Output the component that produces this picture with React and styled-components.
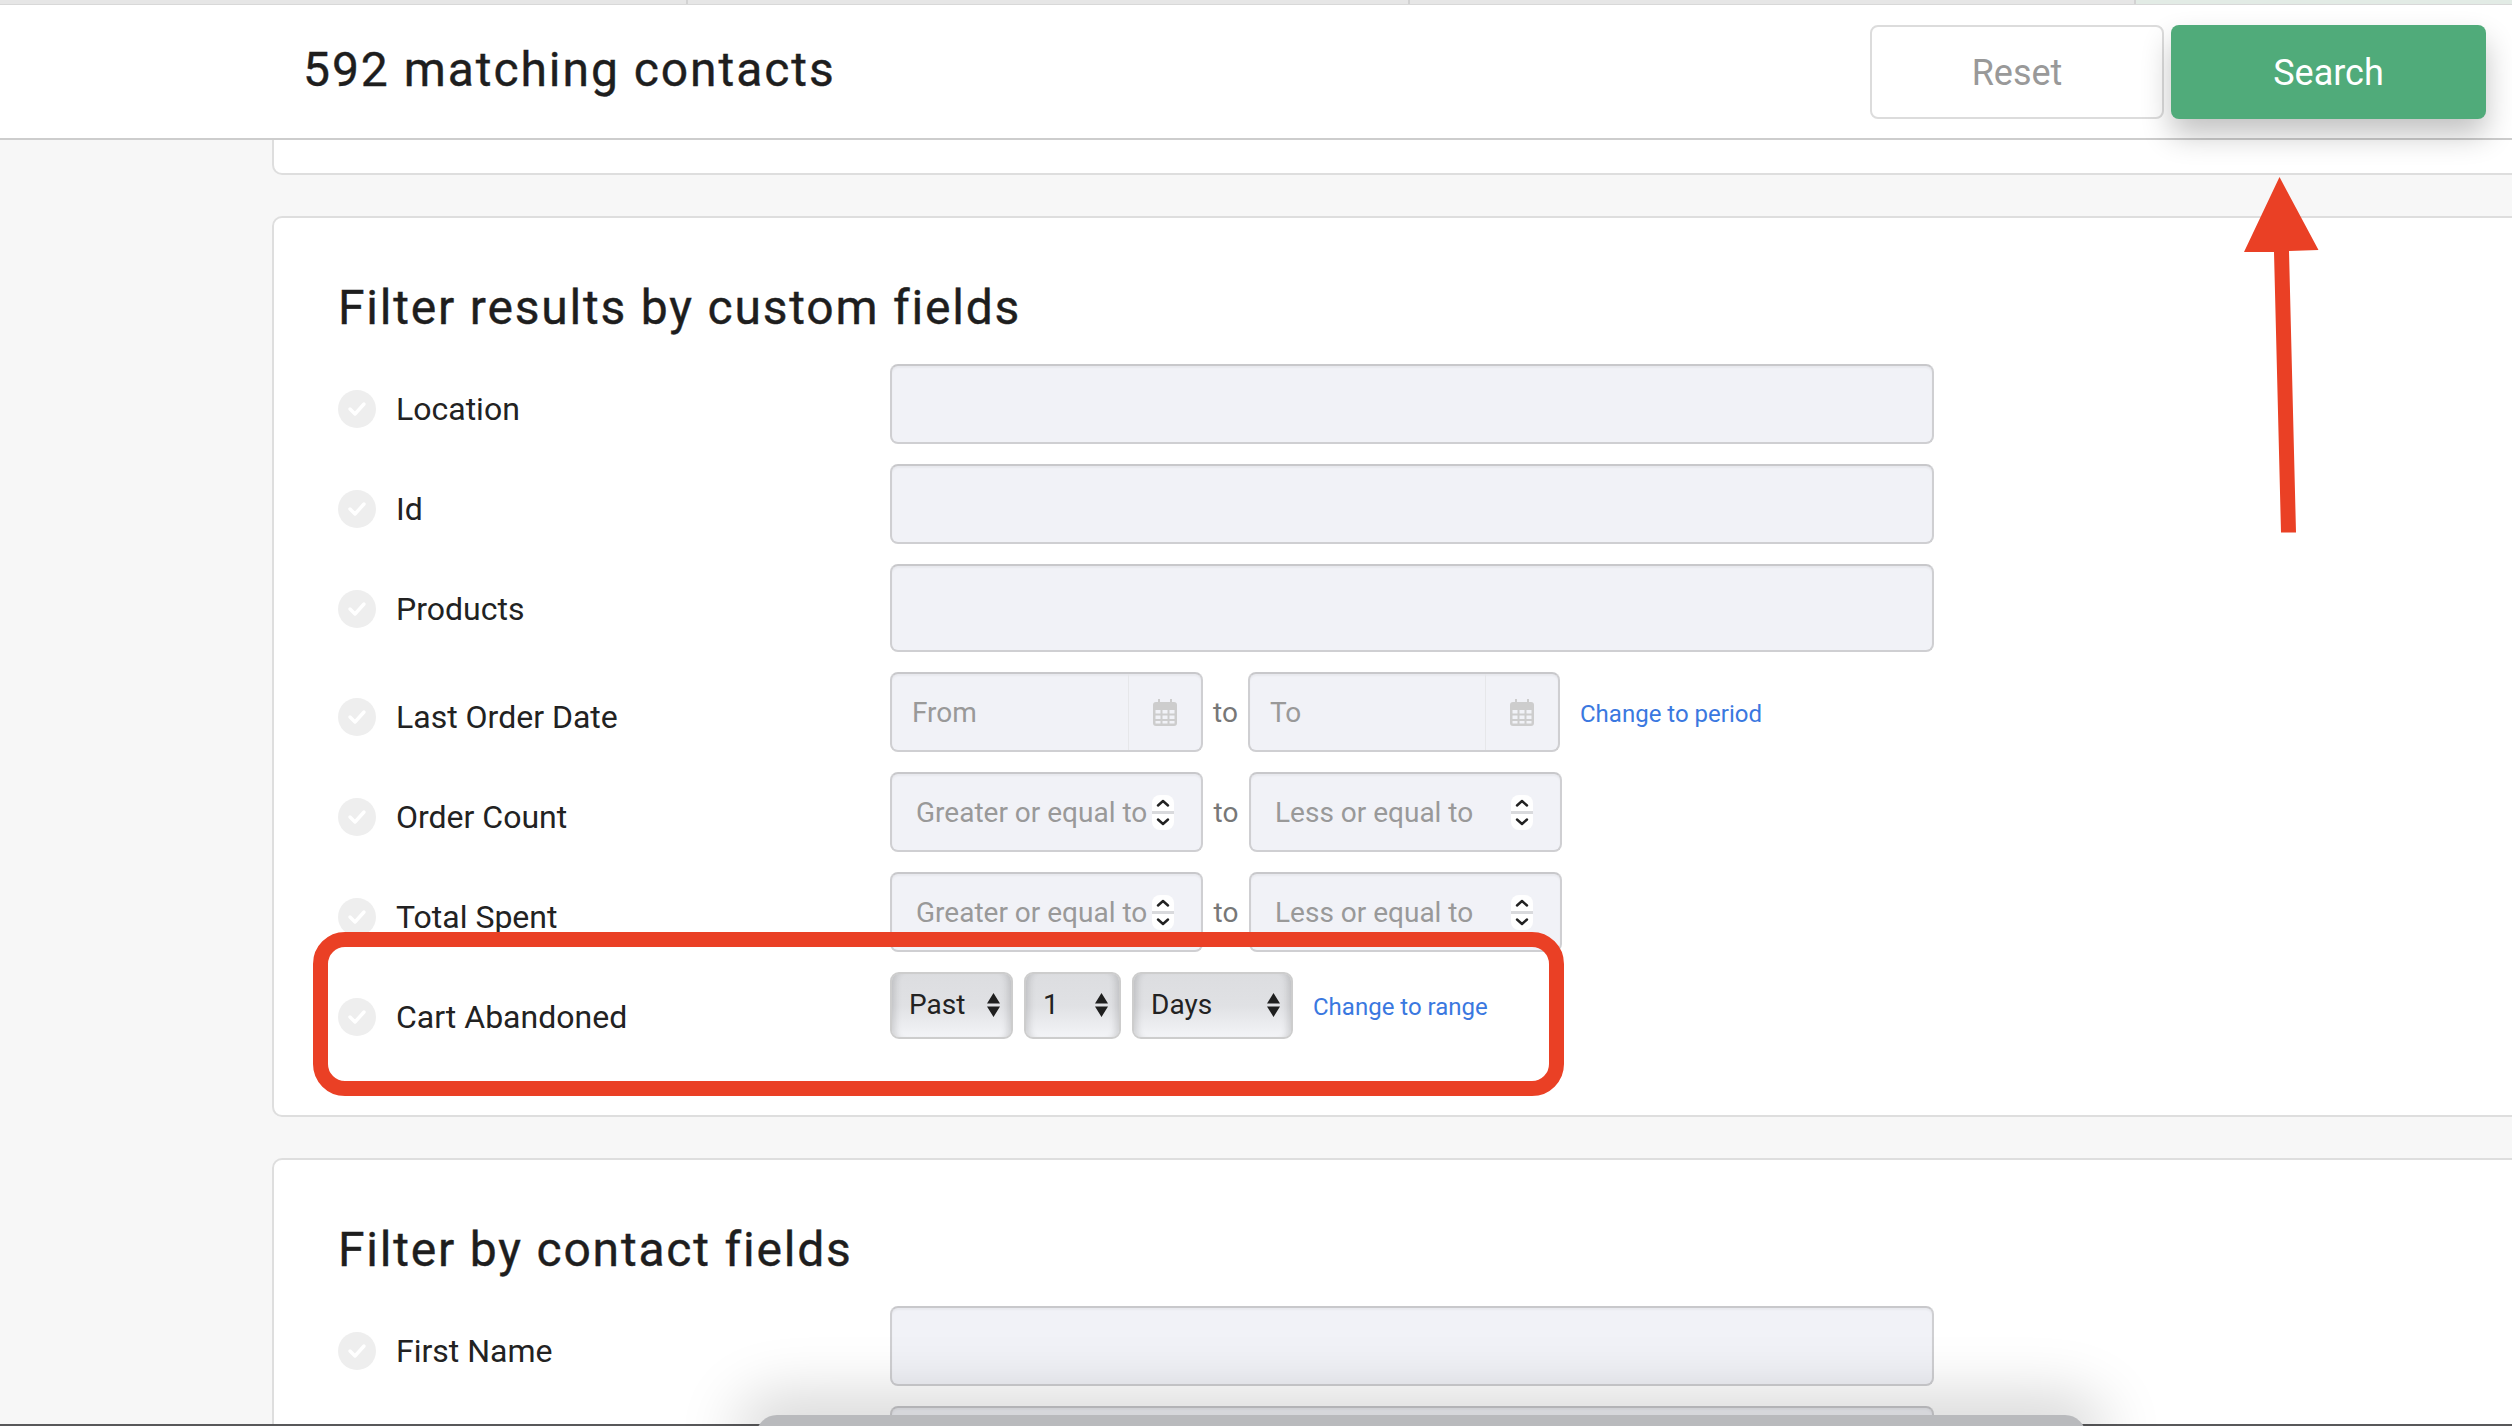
import React from 'react';
import styled, { createGlobalStyle } from 'styled-components';

const GlobalStyle = createGlobalStyle`
  html, body {
    margin: 0;
    padding: 0;
    background: #f7f7f7;
    font-family: Roboto, "Liberation Sans", sans-serif;
  }
  * { box-sizing: border-box; }
`;

const Page = styled.div`
  position: relative;
  height: 100vh;
  overflow: hidden;
  background: #f7f7f7;
`;

const TabStrip = styled.div`
  display: grid;
  grid-template-columns: 688px 722px 726px 1fr;
  height: 4px;
  background: #e6e6e6;
`;

const TabEdge = styled.span`
  border-right: 2px solid #d2d2d2;
  &:last-child { border-right: 0; background: #e2ebe5; }
`;

const Header = styled.header`
  position: relative;
  z-index: 2;
  display: flex;
  align-items: center;
  justify-content: space-between;
  height: 136px;
  padding: 0 26px 0 303px;
  background: #fff;
  border-top: 1px solid #d8d8d8;
  border-bottom: 2px solid #cdcdcd;
`;

const Count = styled.h2`
  margin: 0 0 4px;
  font-size: 48px;
  font-weight: 400;
  letter-spacing: 1.95px;
  -webkit-text-stroke: 0.4px #1e1e1e;
  color: #1e1e1e;
`;

const Actions = styled.div`
  display: flex;
  gap: 7px;
`;

const HeaderButton = styled.button`
  height: 94px;
  width: ${({ $primary }) => ($primary ? '315px' : '294px')};
  padding-top: 4px;
  border-radius: 8px;
  border: ${({ $primary }) => ($primary ? '0' : '2px solid #dcdcdc')};
  background: ${({ $primary }) => ($primary ? '#50ab7a' : '#fff')};
  color: ${({ $primary }) => ($primary ? '#fff' : '#999')};
  box-shadow: ${({ $primary }) => ($primary ? '0 16px 30px rgba(0,0,0,.24)' : 'none')};
  font: 400 36px Roboto, sans-serif;
`;

const Content = styled.main`
  display: flex;
  flex-direction: column;
  gap: 41px;
  width: 2400px;
  margin-left: 272px;
`;

const StubCard = styled.div`
  height: 35px;
  background: #fff;
  border: 2px solid #dedede;
  border-top: 0;
  border-radius: 0 0 10px 10px;
`;

const Card = styled.section`
  padding: 62px 0 63px 64px;
  background: #fff;
  border: 2px solid #dedede;
  border-radius: 10px;
`;

const CardTitle = styled.h3`
  margin: 0 0 28px;
  height: 56px;
  font-size: 48px;
  line-height: 56px;
  font-weight: 400;
  letter-spacing: 1.8px;
  -webkit-text-stroke: 0.4px #1e1e1e;
  color: #1e1e1e;
`;

const Rows = styled.div`
  display: flex;
  flex-direction: column;
  gap: 20px;
`;

const Row = styled.div`
  display: flex;
  align-items: flex-start;
`;

const Label = styled.label`
  display: flex;
  align-items: center;
  gap: 20px;
  flex: 0 0 552px;
  height: 80px;
  padding-top: 10px;
  font-size: 32px;
  color: #222;
`;

const CheckDot = styled.span`
  display: flex;
  align-items: center;
  justify-content: center;
  width: 38px;
  height: 38px;
  border-radius: 50%;
  background: #eeeeee;
`;

const Field = styled.div`
  display: flex;
  align-items: center;
  width: ${({ $width }) => $width}px;
  height: ${({ $tall }) => ($tall ? '88px' : '80px')};
  background: #f1f2f7;
  border: 2px solid #cfcfd2;
  border-top-color: #c8c8cb;
  border-radius: 8px;
  box-shadow: inset 0 2px 2px rgba(0, 0, 0, .04);
`;

const Hint = styled.span`
  flex: 1;
  padding-left: ${({ $left }) => $left}px;
  font-size: 28px;
  color: #999;
  white-space: nowrap;
`;

const DateAddon = styled.span`
  display: flex;
  align-items: center;
  justify-content: center;
  flex: 0 0 73px;
  align-self: stretch;
  border-left: 1px solid #e6e7ea;
`;

const Spinner = styled.span`
  display: flex;
  flex-direction: column;
  align-items: center;
  justify-content: space-between;
  flex: 0 0 22px;
  height: 35px;
  margin-right: 27px;
  padding: 4px 0;
  background: linear-gradient(#fff 46%, #d9dadd 46%, #d9dadd 54%, #fff 54%);
  border-radius: 8px;
`;

const To = styled.span`
  flex: 0 0 ${({ $width }) => $width}px;
  text-align: center;
  font-size: 28px;
  color: #777;
`;

const ChangeLink = styled.a`
  margin-left: 20px;
  padding-top: 3px;
  font-size: 24px;
  color: #3a78e0;
`;

const Selects = styled.div`
  display: flex;
  gap: 11px;
`;

const SelectBox = styled.div`
  display: flex;
  align-items: center;
  justify-content: space-between;
  width: ${({ $width }) => $width}px;
  height: 67px;
  padding: 0 11px 2px 17px;
  border: 2px solid #cdcdcd;
  border-radius: 9px;
  background: linear-gradient(#dcdde0 0%, #e0e1e4 50%, #f3f4f7 100%);
  box-shadow: inset 9px 0 7px -6px rgba(0,0,0,.14), inset -9px 0 7px -6px rgba(0,0,0,.14);
  font-size: 28px;
  color: #222;
`;

const FieldGroup = styled.div`
  display: flex;
  align-items: center;
`;

const RedFrame = styled.div`
  position: absolute;
  z-index: 3;
  left: 313px;
  top: 932px;
  width: 1251px;
  height: 164px;
  border: 15px solid #ea4025;
  border-radius: 32px;
  pointer-events: none;
`;

const RedArrow = styled.svg`
  position: absolute;
  z-index: 3;
  left: 2240px;
  top: 174px;
`;

const ScreenEdge = styled.div`
  position: absolute;
  z-index: 4;
  left: 0;
  right: 0;
  bottom: 0;
  height: 2px;
  background: #58585a;
`;

const Dock = styled.div`
  position: absolute;
  z-index: 5;
  left: 756px;
  bottom: -10px;
  width: 1330px;
  height: 21px;
  border-radius: 22px 22px 0 0;
  background: #b9babd;
  box-shadow: 0 0 60px 20px rgba(0, 0, 0, .17);
`;

const Check = () => (
  <svg width="20" height="16" viewBox="0 0 20 16">
    <path d="M3 8l5 5 9-10" fill="none" stroke="#fff" strokeWidth="3.4" strokeLinecap="round" strokeLinejoin="round" />
  </svg>
);

const CalendarIcon = () => (
  <svg width="24" height="27" viewBox="0 0 24 27">
    <path
      fill="#cdcdcd"
      fillRule="evenodd"
      d="M5 0h2v3h10V0h2v3h2a3 3 0 0 1 3 3v18a3 3 0 0 1-3 3H3a3 3 0 0 1-3-3V6a3 3 0 0 1 3-3h2zM2.500 11v3.500h5V11zm7 0v3.500h5V11zm7 0v3.500h5V11zm-14 5.500V20h5v-3.500zm7 0V20h5v-3.500zm7 0V20h5v-3.500zm-14 5.500v2.500h5V22zm7 0v2.500h5V22zm7 0v2.500h5V22z"
    />
  </svg>
);

const Chevron = ({ d }) => (
  <svg width="14" height="8" viewBox="0 0 14 8">
    <path d={d} fill="none" stroke="#222" strokeWidth="2.4" strokeLinecap="round" strokeLinejoin="round" />
  </svg>
);

const NumberSpinner = () => (
  <Spinner>
    <Chevron d="M2 6.500L7 2l5 4.500" />
    <Chevron d="M2 1.500L7 6l5-4.500" />
  </Spinner>
);

const UpDown = () => (
  <svg width="13" height="24" viewBox="0 0 13 24">
    <path d="M6.500 0L13 10.500H0zM0 13.500h13L6.500 24z" fill="#1f1f1f" />
  </svg>
);

const FieldLabel = ({ children }) => (
  <Label>
    <CheckDot><Check /></CheckDot>
    {children}
  </Label>
);

const DateRange = () => (
  <FieldGroup>
    <Field $width={313}>
      <Hint $left={20}>From</Hint>
      <DateAddon><CalendarIcon /></DateAddon>
    </Field>
    <To $width={45}>to</To>
    <Field $width={312}>
      <Hint $left={20}>To</Hint>
      <DateAddon><CalendarIcon /></DateAddon>
    </Field>
    <ChangeLink>Change to period</ChangeLink>
  </FieldGroup>
);

const NumberRange = () => (
  <FieldGroup>
    <Field $width={313}>
      <Hint $left={24}>Greater or equal to</Hint>
      <NumberSpinner />
    </Field>
    <To $width={46}>to</To>
    <Field $width={313}>
      <Hint $left={24}>Less or equal to</Hint>
      <NumberSpinner />
    </Field>
  </FieldGroup>
);

const Select = ({ width, children }) => (
  <SelectBox $width={width}>
    <span>{children}</span>
    <UpDown />
  </SelectBox>
);

const App = () => (
  <Page>
    <GlobalStyle />
    <TabStrip>
      <TabEdge />
      <TabEdge />
      <TabEdge />
      <TabEdge />
    </TabStrip>
    <Header>
      <Count>592 matching contacts</Count>
      <Actions>
        <HeaderButton>Reset</HeaderButton>
        <HeaderButton $primary>Search</HeaderButton>
      </Actions>
    </Header>
    <Content>
      <StubCard />
      <Card>
        <CardTitle>Filter results by custom fields</CardTitle>
        <Rows>
          <Row>
            <FieldLabel>Location</FieldLabel>
            <Field $width={1044} />
          </Row>
          <Row>
            <FieldLabel>Id</FieldLabel>
            <Field $width={1044} />
          </Row>
          <Row>
            <FieldLabel>Products</FieldLabel>
            <Field $width={1044} $tall />
          </Row>
          <Row>
            <FieldLabel>Last Order Date</FieldLabel>
            <DateRange />
          </Row>
          <Row>
            <FieldLabel>Order Count</FieldLabel>
            <NumberRange />
          </Row>
          <Row>
            <FieldLabel>Total Spent</FieldLabel>
            <NumberRange />
          </Row>
          <Row>
            <FieldLabel>Cart Abandoned</FieldLabel>
            <FieldGroup>
              <Selects>
                <Select width={123}>Past</Select>
                <Select width={97}>1</Select>
                <Select width={161}>Days</Select>
              </Selects>
              <ChangeLink>Change to range</ChangeLink>
            </FieldGroup>
          </Row>
        </Rows>
      </Card>
      <Card>
        <CardTitle>Filter by contact fields</CardTitle>
        <Rows>
          <Row>
            <FieldLabel>First Name</FieldLabel>
            <Field $width={1044} />
          </Row>
          <Row>
            <Label />
            <Field $width={1044} />
          </Row>
        </Rows>
      </Card>
    </Content>
    <RedFrame />
    <RedArrow width="84" height="362" viewBox="0 0 84 362">
      <path d="M39.500 3L78.500 76 49 77 56 358.500 41 358.500 34 78 4 78z" fill="#ea4025" />
    </RedArrow>
    <ScreenEdge />
    <Dock />
  </Page>
);

export default App;
